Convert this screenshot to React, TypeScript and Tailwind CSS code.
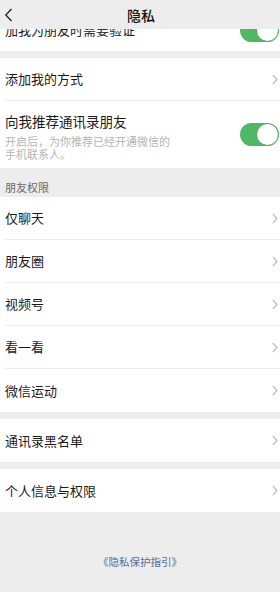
import React from 'react';

const font = { fontFamily: '"Noto Sans CJK SC", "Noto Sans", sans-serif' };

const Chevron: React.FC = () => (
    <svg width="6" height="11" viewBox="0 0 6 11" className="shrink-0">
        <path d="M0.8 0.8 L5 5.5 L0.8 10.2" fill="none" stroke="#b7b7b7" strokeWidth="1.2" />
    </svg>
);

const Toggle: React.FC = () => (
    <div className="relative w-[39px] h-[23px] rounded-full bg-[#4fb865] shrink-0 mr-[1px]">
        <div className="absolute right-[1px] top-[1px] size-[21px] rounded-full bg-white shadow-[0_0_1px_rgba(0,0,0,0.3)]"></div>
    </div>
);

const Row: React.FC<{ label: string; last?: boolean }> = ({ label, last }) => (
    <div className="h-[43px] bg-white pl-[5px]">
        <div className={`h-full flex items-center justify-between pr-[2px] ${last ? '' : 'border-b border-[#ececec]'}`}>
            <span className="text-[13px] text-[#1a1a1a]">{label}</span>
            <Chevron />
        </div>
    </div>
);

export default function App() {
    return (
        <div className="relative w-[280px] h-[592px] bg-[#ededed] overflow-hidden" style={font}>
            {/* header sits over the scrolled list */}
            <div className="absolute top-0 left-0 right-0 h-[29px] bg-[#ededed] z-10 flex items-center justify-center">
                <svg width="9" height="14" viewBox="0 0 9 14" className="absolute left-[4px] top-[8px]">
                    <path d="M7.5 1 L1.8 7 L7.5 13" fill="none" stroke="#222" strokeWidth="1.3" />
                </svg>
                <span className="text-[14px] font-medium text-[#111] ml-[2px] mt-[1px]">隐私</span>
            </div>

            <div className="pt-[9px]">
                <div className="h-[42px] bg-white pl-[5px] flex items-center justify-between">
                    <span className="text-[13px] text-[#1a1a1a]">加我为朋友时需要验证</span>
                    <Toggle />
                </div>

                <div className="h-[7px]"></div>

                <Row label="添加我的方式" />

                <div className="h-[67px] bg-white pl-[5px] flex items-center justify-between">
                    <div className="flex flex-col pt-[3px]">
                        <span className="text-[13.5px] leading-[18px] text-[#1a1a1a]">向我推荐通讯录朋友</span>
                        <span className="text-[11px] leading-[13px] text-[#b4b4b4] mt-[5px] w-[170px]">
                            开启后，为你推荐已经开通微信的手机联系人。
                        </span>
                    </div>
                    <Toggle />
                </div>

                <div className="h-[29px] pl-[5px] flex items-end pb-[2px]">
                    <span className="text-[11px] text-[#6b6b6b]">朋友权限</span>
                </div>

                <Row label="仅聊天" />
                <Row label="朋友圈" />
                <Row label="视频号" />
                <Row label="看一看" />
                <Row label="微信运动" last />

                <div className="h-[7px]"></div>
                <Row label="通讯录黑名单" last />

                <div className="h-[7px]"></div>
                <Row label="个人信息与权限" last />

                <div className="flex justify-center pt-[42px]">
                    <span className="text-[10.5px] text-[#576b95]">《隐私保护指引》</span>
                </div>
            </div>
        </div>
    );
}
